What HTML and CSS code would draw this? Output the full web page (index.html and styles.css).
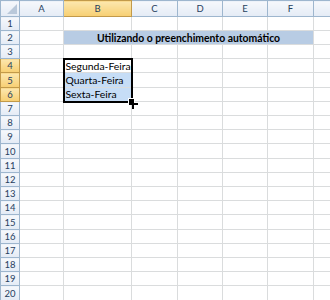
FILE: index.html
```html
<!DOCTYPE html>
<html>
<head>
<meta charset="utf-8">
<link rel="stylesheet" href="styles.css">
</head>
<body>
<div class="sheet">
<table class="grid">
<colgroup>
<col class="c-h"><col class="c-a"><col class="c-b"><col class="c-c"><col class="c-d"><col class="c-e"><col class="c-f"><col class="c-g">
</colgroup>
<tr class="hdr"><th class="corner"><span class="tri"></span></th><th>A</th><th class="on">B</th><th>C</th><th>D</th><th>E</th><th>F</th><th></th></tr>
<tr class="r14"><th>1</th><td></td><td></td><td></td><td></td><td></td><td></td><td></td></tr>
<tr class="r14"><th>2</th><td></td><td class="title" colspan="5">Utilizando o preenchimento automático</td><td></td></tr>
<tr class="r14"><th>3</th><td></td><td></td><td></td><td></td><td></td><td></td><td></td></tr>
<tr class="r14"><th class="on">4</th><td></td><td class="sel top">Segunda-Feira</td><td></td><td></td><td></td><td></td><td></td></tr>
<tr class="r15"><th class="on">5</th><td></td><td class="sel fill">Quarta-Feira</td><td></td><td></td><td></td><td></td><td></td></tr>
<tr class="r14"><th class="on">6</th><td></td><td class="sel fill bot"><span class="txt">Sexta-Feira</span><span class="handle"></span><span class="cross"></span></td><td></td><td></td><td></td><td></td><td></td></tr>
<tr class="r14"><th>7</th><td></td><td></td><td></td><td></td><td></td><td></td><td></td></tr>
<tr class="r14"><th>8</th><td></td><td></td><td></td><td></td><td></td><td></td><td></td></tr>
<tr class="r14"><th>9</th><td></td><td></td><td></td><td></td><td></td><td></td><td></td></tr>
<tr class="r15"><th>10</th><td></td><td></td><td></td><td></td><td></td><td></td><td></td></tr>
<tr class="r14"><th>11</th><td></td><td></td><td></td><td></td><td></td><td></td><td></td></tr>
<tr class="r14"><th>12</th><td></td><td></td><td></td><td></td><td></td><td></td><td></td></tr>
<tr class="r14"><th>13</th><td></td><td></td><td></td><td></td><td></td><td></td><td></td></tr>
<tr class="r14"><th>14</th><td></td><td></td><td></td><td></td><td></td><td></td><td></td></tr>
<tr class="r15"><th>15</th><td></td><td></td><td></td><td></td><td></td><td></td><td></td></tr>
<tr class="r14"><th>16</th><td></td><td></td><td></td><td></td><td></td><td></td><td></td></tr>
<tr class="r14"><th>17</th><td></td><td></td><td></td><td></td><td></td><td></td><td></td></tr>
<tr class="r14"><th>18</th><td></td><td></td><td></td><td></td><td></td><td></td><td></td></tr>
<tr class="r14"><th>19</th><td></td><td></td><td></td><td></td><td></td><td></td><td></td></tr>
<tr class="r15"><th>20</th><td></td><td></td><td></td><td></td><td></td><td></td><td></td></tr>
</table>
</div>
</body>
</html>
```

FILE: styles.css
```css
html, body {
  margin: 0;
  padding: 0;
  background: #ffffff;
}
.sheet {
  width: 330px;
  height: 300px;
  overflow: hidden;
}
.grid {
  border-collapse: collapse;
  table-layout: fixed;
  width: 330px;
  font-family: Lato, "Open Sans", sans-serif;
}
.c-h { width: 19px; }
.c-a { width: 44px; }
.c-b { width: 68px; }
.c-c { width: 46px; }
.c-d { width: 45px; }
.c-e { width: 45px; }
.c-f { width: 46px; }
.c-g { width: 17px; }

.grid th {
  background: linear-gradient(#f6f8fc, #e4ebf5);
  border: 1px solid #9eb6ce;
  color: #27415f;
  font-weight: normal;
  font-size: 9.5px;
  padding: 0;
  text-align: center;
  overflow: hidden;
}
.grid tr.hdr { height: 16px; }
.grid tr.r14 { height: 14px; }
.grid tr.r15 { height: 15px; }
.grid td {
  border: 1px solid #dadcdd;
  padding: 0;
  font-size: 10.4px;
  color: #000;
  white-space: nowrap;
  overflow: hidden;
  line-height: 12px;
}
.grid th.on {
  background: linear-gradient(#fce7ae, #f7cf72);
  border-color: #c29a4a;
}
.grid th.corner {
  position: relative;
}
.tri {
  position: absolute;
  right: 2px;
  bottom: 2px;
  width: 0;
  height: 0;
  border-left: 10px solid transparent;
  border-bottom: 10px solid #b9c8da;
}
.grid td.title {
  background: #b8cce4;
  font-weight: bold;
  text-align: center;
  font-size: 10.4px;
  color: #000;
}
.grid td.sel {
  border-left: 2px solid #000;
  border-right: 2px solid #000;
  padding-left: 1px;
}
.grid td.top { border-top: 2px solid #000; }
.grid td.bot { border-bottom: 2px solid #000; position: relative; overflow: visible; }
.grid td.fill { background: #c6ddf6; }
.handle {
  position: absolute;
  right: -4px;
  bottom: -4px;
  width: 5px;
  height: 5px;
  background: #000;
  border: 1px solid #fff;
}
.cross {
  position: absolute;
  right: -7px;
  bottom: -8px;
  width: 9px;
  height: 9px;
  background:
    linear-gradient(#000, #000) center / 2px 9px no-repeat,
    linear-gradient(#000, #000) center / 9px 2px no-repeat;
}
```
